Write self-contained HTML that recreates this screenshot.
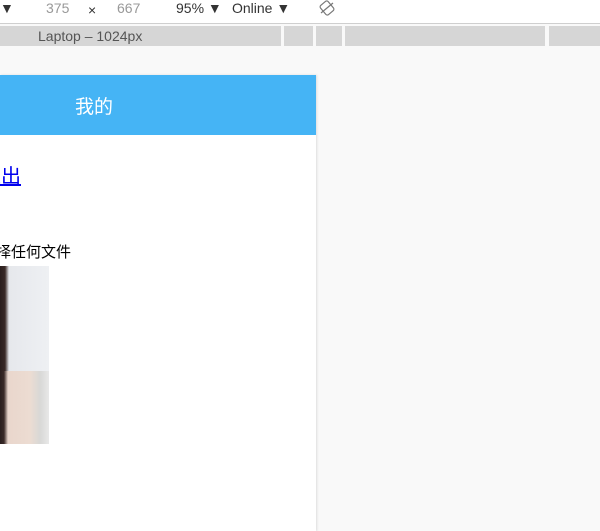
<!DOCTYPE html>
<html><head><meta charset="utf-8"><style>
*{margin:0;padding:0;box-sizing:border-box}
body{width:600px;height:531px;overflow:hidden;background:#f9f9f9;font-family:"Liberation Sans","Noto Sans CJK SC",sans-serif;position:relative}
.tb{position:absolute;left:0;top:0;width:600px;height:24px;background:#fff;border-bottom:1px solid #cfcfcf;font-size:14px;color:#333}
.tb span{position:absolute;top:0px}
.bar{position:absolute;top:26px;height:20px;background:#d6d6d6}
.panel{position:absolute;left:0;top:75px;width:316px;height:456px;background:#fff;box-shadow:1px 0 2px #ddd}
.hd{height:60px;background:#45b4f5;color:#fff;font-size:19px;text-align:center;line-height:62px;padding-right:128px;padding-top:2px}
.t{position:absolute;font-size:16px;color:#000}
</style></head><body>
<div class="tb">
<span style="left:0">▼</span>
<span style="left:46px;color:#999">375</span>
<span style="left:88px;color:#333;top:2px">×</span>
<span style="left:117px;color:#999">667</span>
<span style="left:176px">95% ▼</span>
<span style="left:232px">Online ▼</span>
<svg style="position:absolute;left:318px;top:0" width="18" height="16" viewBox="0 0 18 16"><g fill="none" stroke="#777" stroke-width="1.2"><rect x="4" y="2" width="10" height="12" rx="2" transform="rotate(-40 9 8)"/><path d="M3 13 L15 3"/></g></svg>
</div>
<div class="bar" style="left:0;width:281px"></div>
<div class="bar" style="left:284px;width:29px"></div>
<div class="bar" style="left:316px;width:26px"></div>
<div class="bar" style="left:345px;width:200px"></div>
<div class="bar" style="left:549px;width:51px"></div>
<div style="position:absolute;left:38px;top:28px;font-size:14px;color:#555">Laptop – 1024px</div>
<div class="panel">
<div class="hd">我的</div>
<div class="t" style="left:-19px;top:85px;color:#00e;text-decoration:underline;font-size:20px">退出</div>
<div class="t" style="left:-19px;top:166px;font-size:15px">选择任何文件</div>
<div style="position:absolute;left:0;top:191px;width:49px;height:178px;background:linear-gradient(90deg,#2a1e1e 0,#3a2a28 5px,#e6e8ec 9px,#eef0f3 49px)">
<div style="position:absolute;left:0;top:105px;width:49px;height:73px;background:linear-gradient(90deg,#2a1e1e 0,#3a2a28 4px,#e9d6cc 8px,#ecdcd2 30px,#d8d8d6 40px,#e8e8e8 49px)"></div>
</div>
</div>
</body></html>
